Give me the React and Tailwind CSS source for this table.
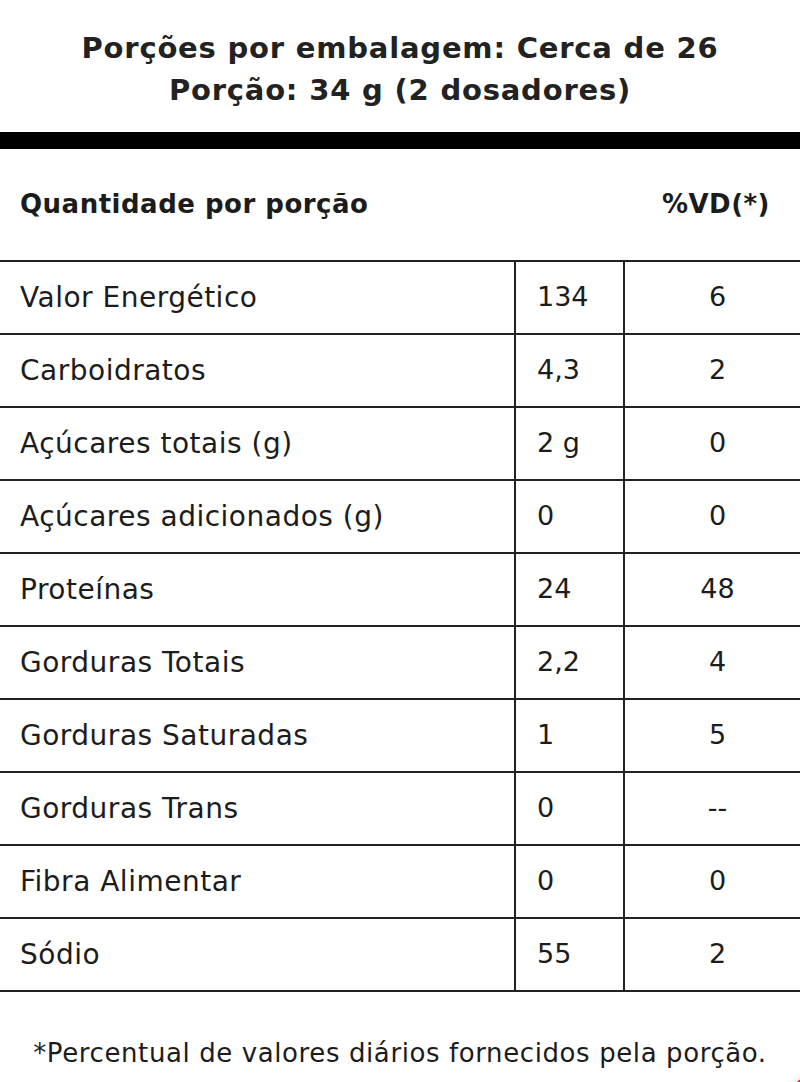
import React from "react";

const rows = [
  ["Valor Energético", "134", "6"],
  ["Carboidratos", "4,3", "2"],
  ["Açúcares totais (g)", "2 g", "0"],
  ["Açúcares adicionados (g)", "0", "0"],
  ["Proteínas", "24", "48"],
  ["Gorduras Totais", "2,2", "4"],
  ["Gorduras Saturadas", "1", "5"],
  ["Gorduras Trans", "0", "--"],
  ["Fibra Alimentar", "0", "0"],
  ["Sódio", "55", "2"],
];

export default function App() {
  return (
    <div
      className="relative w-[800px] h-[1082px] overflow-hidden bg-white text-[#1c1c1c]"
      style={{ fontFamily: "'DejaVu Sans', sans-serif" }}
    >
      <div className="pt-[27px] text-center text-[29px] font-bold leading-[42px] tracking-[0.8px] text-[#222]">
        <div>Porções por embalagem: Cerca de 26</div>
        <div>Porção: 34 g (2 dosadores)</div>
      </div>
      <div className="mt-[21px] h-[17px] bg-black" />
      <div className="flex h-[111px] items-center justify-between pl-[20px] pr-[30px] text-[26px] font-bold tracking-[0.5px]">
        <span>Quantidade por porção</span>
        <span>%VD(*)</span>
      </div>
      <div className="border-t-2 border-[#222]">
        {rows.map(([a, b, c]) => (
          <div key={a} className="flex h-[73px] border-b-2 border-[#222] text-[28px]">
            <div className="flex w-[514px] items-center pl-[20px] tracking-[0.5px]">{a}</div>
            <div className="flex w-[109px] items-center border-l-2 border-[#222] pl-[21px] text-[27px]">{b}</div>
            <div className="flex flex-1 items-center justify-center border-l-2 border-[#222] pl-[10px] text-[27px]">{c}</div>
          </div>
        ))}
      </div>
      <div className="mt-[46px] text-center text-[26px] leading-[30px] tracking-[0.6px] text-[#1c1c1c]">
        *Percentual de valores diários fornecidos pela porção.
      </div>
      <div className="absolute left-[786px] top-[1075px] h-[60px] w-[60px] rounded-full bg-[#e1173a] shadow-[0_0_8px_rgba(0,0,0,0.15)]" />
    </div>
  );
}
